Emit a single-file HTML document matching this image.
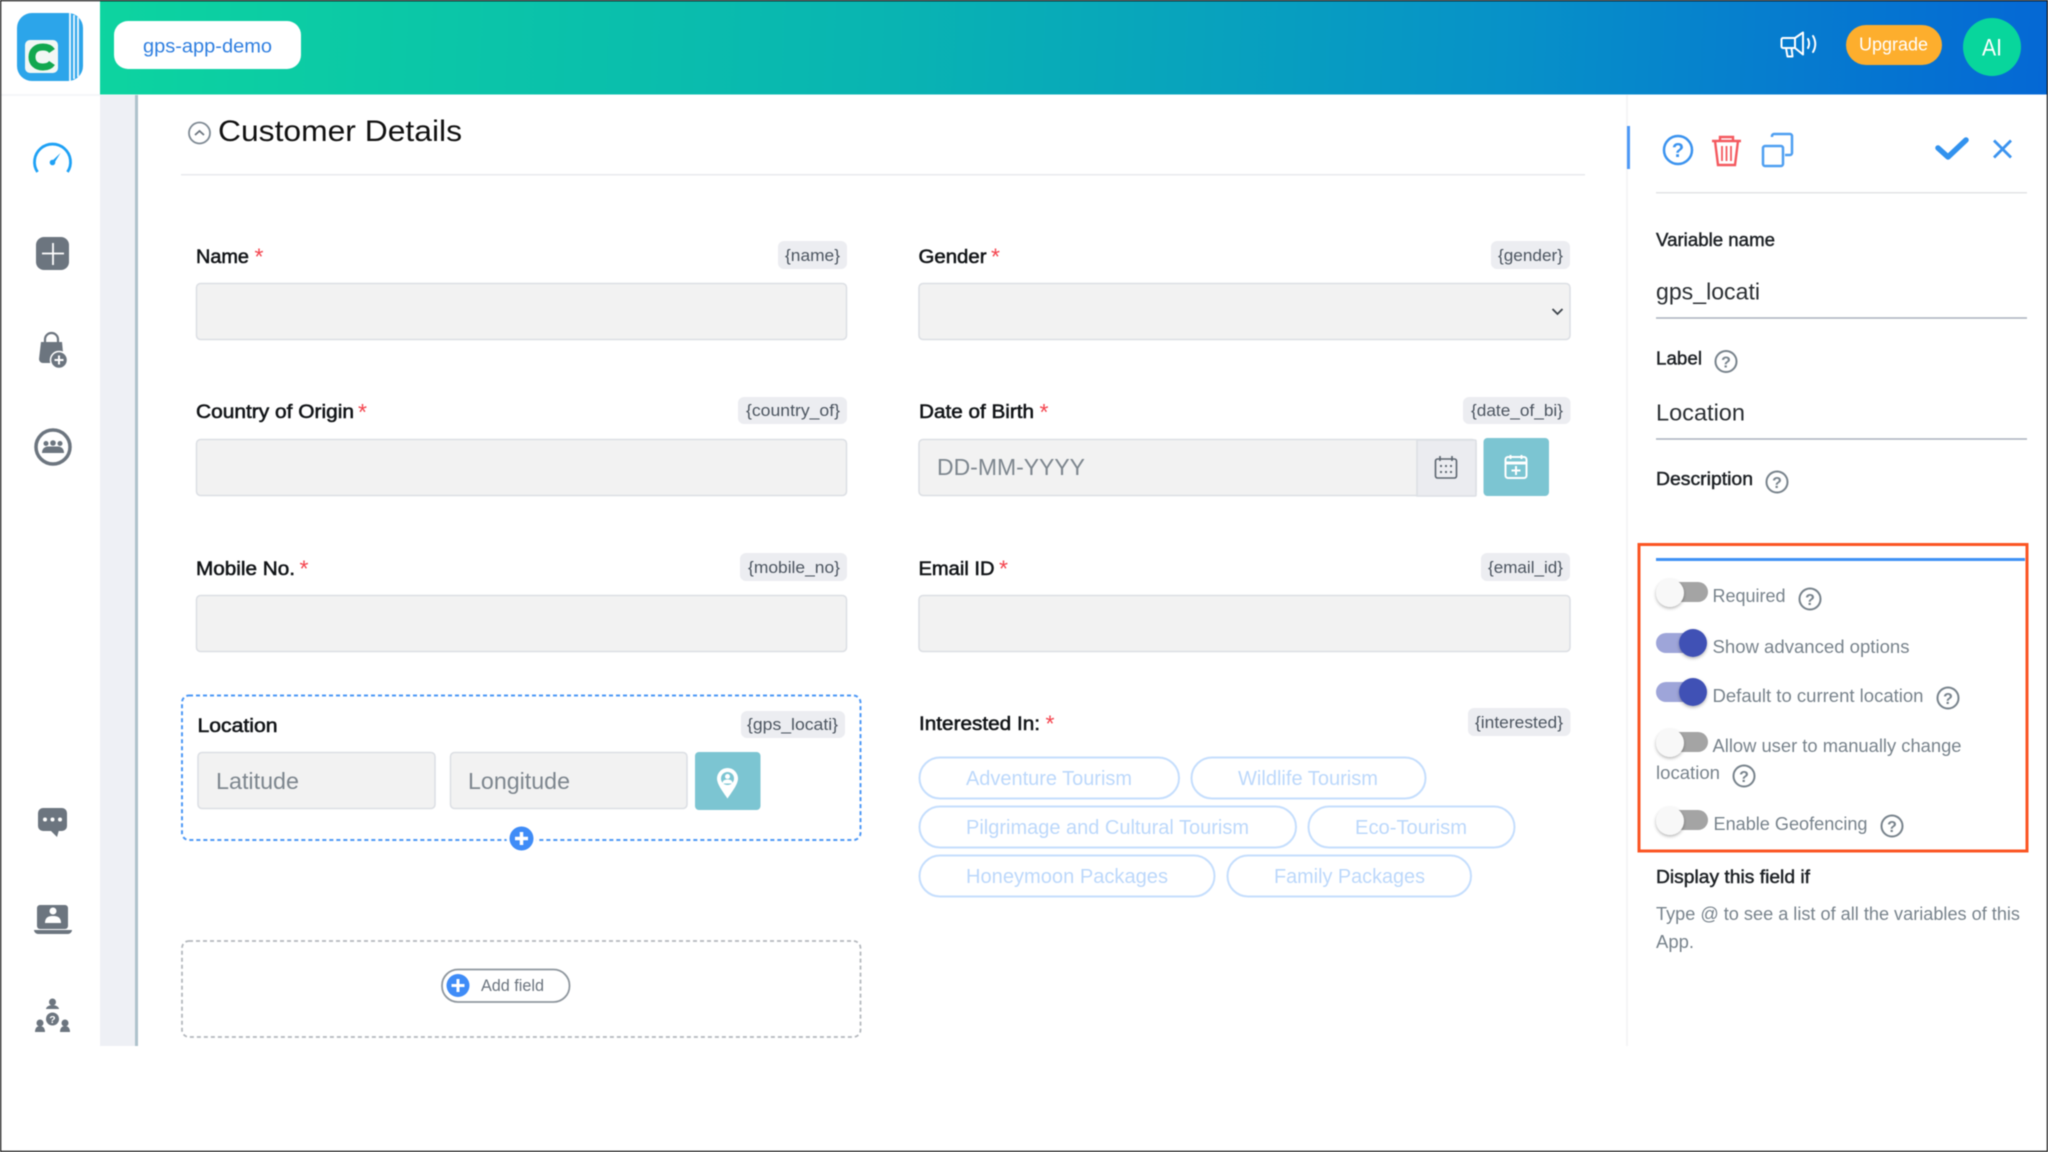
<!DOCTYPE html>
<html><head><meta charset="utf-8"><title>Customer Details</title>
<style>
html,body{margin:0;padding:0;background:#fff;width:2048px;height:1152px;overflow:hidden}
svg{display:block;filter:blur(.45px)}
text{font-family:"Liberation Sans",Arial,sans-serif;white-space:pre}
.l{font-size:19.500px;fill:#111417;stroke:#111417;stroke-width:.55px}
.s{font-size:23px;fill:#f4444e}
.t{font-size:16.500px;fill:#4c5560}
.tb{fill:#ecedf1}
.i{fill:#f2f2f2;stroke:#dcdfe4;stroke-width:1.5}
.p{font-size:23px;fill:#7d868e}
.c{fill:#fff;stroke:#c5defd;stroke-width:2}
.ct{font-size:20px;fill:#bcd8fb}
.g{font-size:18px;fill:#78838c}
.pl{font-size:18px;fill:#1d2125;stroke:#1d2125;stroke-width:.45px}
.pv{font-size:23px;fill:#2b2f33}
.ln{stroke:#aab2bd;stroke-width:1.5}
.h{fill:none;stroke:#78838c;stroke-width:2}
.hq{font-size:16px;font-weight:700;fill:#78838c;text-anchor:middle}
</style></head><body>
<svg width="2048" height="1152" viewBox="0 0 2048 1152" xmlns="http://www.w3.org/2000/svg">
<defs>
<linearGradient id="hd" x1="100" y1="0" x2="2048" y2="94" gradientUnits="userSpaceOnUse">
<stop offset="0" stop-color="#0dd4a0"/><stop offset=".4" stop-color="#09b5b2"/><stop offset=".72" stop-color="#0792c8"/><stop offset="1" stop-color="#0568d5"/>
</linearGradient>
<filter id="sh" x="-30%" y="-30%" width="160%" height="170%"><feDropShadow dx="0" dy="1.5" stdDeviation="1.6" flood-color="#000" flood-opacity=".3"/></filter>
</defs>
<rect width="2048" height="1152" fill="#fff"/>

<!-- header -->
<rect x="100" y="0" width="1948" height="94.5" fill="url(#hd)"/>
<rect x="0" y="94" width="100" height="2" fill="#f5f6f8"/>
<rect x="100" y="95" width="35" height="951" fill="#eef0f5"/>
<rect x="135" y="95" width="3" height="951" fill="#aec2cc"/>

<!-- logo -->
<rect x="17" y="13" width="66" height="68" rx="15" fill="#2ca5ea"/>
<path d="M69 13h2v68h-2zM73 15h2v64h-2zM77 17h2v60h-2z" fill="#dff2fd"/>
<rect x="25" y="40" width="33" height="33" rx="5" fill="#f2f7f4"/>
<path d="M52 51c-2-3-5-4-9-4c-7 0-11 4-11 10s4 10 11 10c4 0 7-1 9-4" fill="none" stroke="#12a84f" stroke-width="7"/>

<rect x="114" y="21" width="187" height="48" rx="14" fill="#fff"/>
<text x="143" y="52.500" font-size="19" fill="#2f7fe0" textLength="129" lengthAdjust="spacingAndGlyphs">gps-app-demo</text>

<!-- header right -->
<g fill="none" stroke="#fff" stroke-width="2" stroke-linejoin="round" stroke-linecap="round">
<path d="M1783 38h12v10h-12a1.500 1.500 0 0 1-1.500-1.500v-7a1.500 1.500 0 0 1 1.500-1.500z"/>
<path d="M1795 38l8-5.500v22l-8-6.500"/>
<path d="M1786 48l1.500 8.500h5l-1-8.500"/>
<path d="M1808 39c1.500 3 1.500 6 0 9M1813 36c3 5 3 11 0 16"/>
</g>
<rect x="1846" y="25" width="96" height="40" rx="20" fill="#fdae2d"/>
<text x="1859" y="50.500" font-size="18" fill="#fff" textLength="69" lengthAdjust="spacingAndGlyphs">Upgrade</text>
<circle cx="1992" cy="47" r="29" fill="#08d69c"/>
<text x="1982" y="55.500" font-size="24" fill="#fff" textLength="20" lengthAdjust="spacingAndGlyphs">AI</text>

<!-- sidebar icons -->
<path d="M37.500 172a18 18 0 1 1 30 0" fill="none" stroke="#1ea1f5" stroke-width="2.800"/>
<circle cx="52.500" cy="162.500" r="2.800" fill="#1ea1f5"/><path d="M51.500 161.500l9-8.500-6.500 10.500z" fill="#1ea1f5"/>

<rect x="36" y="237" width="33" height="33" rx="8" fill="#6c757f"/>
<path d="M53 243v22M42 253.500h22" stroke="#fff" stroke-width="1.800"/>

<path d="M45 342v-2.500a6.500 6.500 0 0 1 13 0v2.500" fill="none" stroke="#6c757f" stroke-width="2.200"/>
<path d="M41 342h21l2 21h-21a4 4 0 0 1-4-4z" fill="#6c757f"/>
<circle cx="59" cy="360" r="8.500" fill="#6c757f" stroke="#fff" stroke-width="1.500"/>
<path d="M59 355.500v9M54.500 360h9" stroke="#fff" stroke-width="2"/>

<circle cx="53" cy="447" r="17" fill="none" stroke="#6c757f" stroke-width="3.500"/>
<g fill="#6c757f"><circle cx="53" cy="443" r="2.800"/><circle cx="46" cy="443.500" r="2.500"/><circle cx="60" cy="443.500" r="2.500"/>
<path d="M42 453c0-6 5-6.500 6-6.500h10c1 0 6 .5 6 6.500z"/></g>

<rect x="38" y="808" width="29" height="23" rx="5" fill="#6c757f"/><path d="M50 830h9l-2 7z" fill="#6c757f"/>
<circle cx="45" cy="819.500" r="2" fill="#fff"/><circle cx="52.500" cy="819.500" r="2" fill="#fff"/><circle cx="60" cy="819.500" r="2" fill="#fff"/>

<rect x="37" y="905" width="31" height="24" rx="3" fill="#6c757f"/>
<path d="M34 930h38c0 2-2 4-4 4h-30c-2 0-4-2-4-4z" fill="#6c757f"/>
<circle cx="53" cy="911" r="3.500" fill="#fff"/><path d="M45 923c0-6 4-7 8-7s8 1 8 7z" fill="#fff"/>

<g fill="#6c757f">
<circle cx="52.500" cy="1002" r="3.500"/><path d="M46 1009c0-2 3-4 6.500-4s6.500 2 6.500 4z"/>
<circle cx="40" cy="1023" r="3.500"/><path d="M35 1032c0-4 2-6 5-6s5 2 5 6z"/>
<circle cx="65" cy="1023" r="3.500"/><path d="M60 1032c0-4 2-6 5-6s5 2 5 6z"/>
<circle cx="52.500" cy="1019" r="6.500"/>
</g>
<text x="52.500" y="1023" font-size="10.500" font-weight="700" fill="#fff" text-anchor="middle">?</text>

<!-- title -->
<circle cx="199.500" cy="133" r="10.500" fill="none" stroke="#7f8a94" stroke-width="1.800"/>
<path d="M195 135l4.500-4 4.500 4" fill="none" stroke="#6c757f" stroke-width="1.800"/>
<text x="218" y="141" font-size="30" fill="#111" textLength="244" lengthAdjust="spacingAndGlyphs">Customer Details</text>
<rect x="181" y="174" width="1404" height="1.500" fill="#e8eaed"/>

<!-- field rows -->
<text class="l" x="196" y="263" textLength="53" lengthAdjust="spacingAndGlyphs">Name</text><text class="s" x="254.500" y="264.500">*</text>
<rect class="tb" x="778" y="241" width="69" height="28" rx="6"/><text class="t" x="785" y="261" textLength="55" lengthAdjust="spacingAndGlyphs">{name}</text>
<rect class="i" x="196.500" y="283.500" width="650" height="56" rx="4"/>

<text class="l" x="918.500" y="263" textLength="68" lengthAdjust="spacingAndGlyphs">Gender</text><text class="s" x="991" y="264.500">*</text>
<rect class="tb" x="1491" y="241" width="79" height="28" rx="6"/><text class="t" x="1498" y="261" textLength="65" lengthAdjust="spacingAndGlyphs">{gender}</text>
<rect class="i" x="919" y="283.500" width="651" height="56" rx="4"/>
<path d="M1552.500 309l5 5 5-5" fill="none" stroke="#3d444b" stroke-width="1.800"/>

<text class="l" x="196" y="418" textLength="158" lengthAdjust="spacingAndGlyphs">Country of Origin</text><text class="s" x="358" y="420">*</text>
<rect class="tb" x="738" y="397" width="109" height="27" rx="6"/><text class="t" x="746" y="416" textLength="94" lengthAdjust="spacingAndGlyphs">{country_of}</text>
<rect class="i" x="196.500" y="439.500" width="650" height="56" rx="4"/>

<text class="l" x="919" y="418" textLength="115" lengthAdjust="spacingAndGlyphs">Date of Birth</text><text class="s" x="1039.500" y="420">*</text>
<rect class="tb" x="1463" y="397" width="107.500" height="27" rx="6"/><text class="t" x="1471" y="416" textLength="92" lengthAdjust="spacingAndGlyphs">{date_of_bi}</text>
<rect class="i" x="919" y="439.500" width="557" height="56" rx="4"/>
<path d="M1417 440h58a1 1 0 0 1 1 1v54a1 1 0 0 1-1 1h-58z" fill="#ebecf0" stroke="#dcdfe4" stroke-width="1.500"/>
<text class="p" x="937" y="475" textLength="148" lengthAdjust="spacingAndGlyphs">DD-MM-YYYY</text>
<rect x="1435.500" y="459" width="21" height="19" rx="2" fill="none" stroke="#5c656f" stroke-width="1.600"/>
<path d="M1440 456v5M1452 456v5" stroke="#5c656f" stroke-width="1.600"/>
<g fill="#5c656f"><circle cx="1441" cy="466" r="1.100"/><circle cx="1446" cy="466" r="1.100"/><circle cx="1451" cy="466" r="1.100"/><circle cx="1441" cy="472" r="1.100"/><circle cx="1446" cy="472" r="1.100"/><circle cx="1451" cy="472" r="1.100"/></g>
<rect x="1483.500" y="438" width="65.500" height="58" rx="4" fill="#7cc5d2"/>
<rect x="1505.500" y="457" width="21" height="21" rx="2.500" fill="none" stroke="#fff" stroke-width="2"/>
<path d="M1505.500 463h21" stroke="#fff" stroke-width="3"/><path d="M1510.500 455v4M1521.500 455v4M1516 466v9M1511.500 470.500h9" stroke="#fff" stroke-width="2"/>

<text class="l" x="196" y="575" textLength="99" lengthAdjust="spacingAndGlyphs">Mobile No.</text><text class="s" x="299.500" y="576.500">*</text>
<rect class="tb" x="740" y="553" width="107" height="28" rx="6"/><text class="t" x="748" y="573" textLength="92" lengthAdjust="spacingAndGlyphs">{mobile_no}</text>
<rect class="i" x="196.500" y="595.500" width="650" height="56" rx="4"/>

<text class="l" x="918.500" y="575" textLength="76" lengthAdjust="spacingAndGlyphs">Email ID</text><text class="s" x="999" y="576.500">*</text>
<rect class="tb" x="1481" y="553" width="89" height="28" rx="6"/><text class="t" x="1488" y="573" textLength="75" lengthAdjust="spacingAndGlyphs">{email_id}</text>
<rect class="i" x="919" y="595.500" width="651" height="56" rx="4"/>

<!-- location box -->
<rect x="182" y="695.500" width="678.500" height="144.500" rx="7" fill="none" stroke="#4d98f6" stroke-width="2" stroke-dasharray="4 3"/>
<text class="l" x="197.500" y="732" textLength="80" lengthAdjust="spacingAndGlyphs">Location</text>
<rect class="tb" x="741" y="711" width="104" height="27" rx="6"/><text class="t" x="747" y="730" textLength="91" lengthAdjust="spacingAndGlyphs">{gps_locati}</text>
<rect class="i" x="198" y="752.500" width="237" height="56" rx="4"/>
<text class="p" x="216" y="789" textLength="83" lengthAdjust="spacingAndGlyphs">Latitude</text>
<rect class="i" x="450.500" y="752.500" width="236.500" height="56" rx="4"/>
<text class="p" x="468" y="789" textLength="102" lengthAdjust="spacingAndGlyphs">Longitude</text>
<rect x="695" y="752" width="65.500" height="58" rx="4" fill="#7cc5d2"/>
<path d="M727.500 798.500c-4-6-10.500-14-10.500-20a10.500 10.500 0 0 1 21 0c0 6-6.500 14-10.500 20z" fill="#fff"/>
<circle cx="727.500" cy="778.500" r="6.500" fill="#7cc5d2"/><circle cx="727.500" cy="776.500" r="2.500" fill="#fff"/><path d="M722.500 783.500c0-3 2-4 5-4s5 1 5 4z" fill="#fff"/>
<circle cx="521.500" cy="838.500" r="15" fill="#fff"/>
<circle cx="521.500" cy="838.500" r="12" fill="#3f8cf7"/>
<path d="M521.500 832v13M515 838.500h13" stroke="#fff" stroke-width="3.500"/>

<!-- add field -->
<rect x="182" y="941" width="678.500" height="96" rx="7" fill="none" stroke="#b4b8bd" stroke-width="1.800" stroke-dasharray="4 3"/>
<rect x="442" y="969.500" width="127.500" height="32.500" rx="16" fill="#fff" stroke="#8f979e" stroke-width="1.800"/>
<circle cx="458" cy="985.500" r="11.500" fill="#3f8cf7"/>
<path d="M458 979v13M451.500 985.500h13" stroke="#fff" stroke-width="3"/>
<text x="481" y="991" font-size="17" fill="#6c757f" textLength="63" lengthAdjust="spacingAndGlyphs">Add field</text>

<!-- interested -->
<text class="l" x="919" y="730" textLength="121" lengthAdjust="spacingAndGlyphs">Interested In:</text><text class="s" x="1045.500" y="731.500">*</text>
<rect class="tb" x="1468" y="708" width="102.500" height="28" rx="6"/><text class="t" x="1475" y="728" textLength="88" lengthAdjust="spacingAndGlyphs">{interested}</text>

<rect class="c" x="919.500" y="757.500" width="259.500" height="41" rx="20.500"/><text class="ct" x="966" y="785" textLength="166" lengthAdjust="spacingAndGlyphs">Adventure Tourism</text>
<rect class="c" x="1191.500" y="757.500" width="234" height="41" rx="20.500"/><text class="ct" x="1238" y="785" textLength="140" lengthAdjust="spacingAndGlyphs">Wildlife Tourism</text>
<rect class="c" x="919.500" y="806.500" width="376.500" height="41" rx="20.500"/><text class="ct" x="966" y="834" textLength="283" lengthAdjust="spacingAndGlyphs">Pilgrimage and Cultural Tourism</text>
<rect class="c" x="1308.500" y="806.500" width="206" height="41" rx="20.500"/><text class="ct" x="1355" y="834" textLength="112" lengthAdjust="spacingAndGlyphs">Eco-Tourism</text>
<rect class="c" x="919.500" y="855.500" width="295" height="41" rx="20.500"/><text class="ct" x="966" y="883" textLength="202" lengthAdjust="spacingAndGlyphs">Honeymoon Packages</text>
<rect class="c" x="1227.500" y="855.500" width="243.500" height="41" rx="20.500"/><text class="ct" x="1274" y="883" textLength="151" lengthAdjust="spacingAndGlyphs">Family Packages</text>

<!-- right panel -->
<rect x="1626" y="95" width="2" height="951" fill="#f5f5f6"/>
<rect x="1627" y="126" width="3" height="43" fill="#4d98f6"/>
<circle cx="1678" cy="150" r="14" fill="none" stroke="#3b93ef" stroke-width="2.500"/>
<text x="1678" y="157" font-size="20" font-weight="700" fill="#3b93ef" text-anchor="middle">?</text>
<g fill="none" stroke="#f4595f" stroke-width="2.400">
<path d="M1712 141h29M1720 141v-4h13v4M1715 141l3 24h17l3-24"/>
<path d="M1722 146v15M1726.500 146v15M1731 146v15" stroke-width="1.800"/>
</g>
<g fill="none" stroke="#4f9ff1" stroke-width="2.500" stroke-linejoin="round">
<rect x="1763" y="146" width="20" height="20" rx="2"/>
<path d="M1772 137v-1a2 2 0 0 1 2-2h16a2 2 0 0 1 2 2v17a2 2 0 0 1-2 2h-5"/>
</g>
<path d="M1938 148l10 9 18-17" fill="none" stroke="#3292ee" stroke-width="5.500" stroke-linecap="round" stroke-linejoin="round"/>
<path d="M1994 140.500l17 17M2011 140.500l-17 17" stroke="#3b93ef" stroke-width="2.800"/>
<rect x="1656" y="192" width="371" height="1.500" fill="#e2e4e6"/>

<text class="pl" x="1656" y="246" textLength="119" lengthAdjust="spacingAndGlyphs">Variable name</text>
<text class="pv" x="1656" y="299.500" textLength="104" lengthAdjust="spacingAndGlyphs">gps_locati</text>
<line class="ln" x1="1656" y1="318" x2="2027" y2="318"/>
<text class="pl" x="1656" y="364.500" textLength="46" lengthAdjust="spacingAndGlyphs">Label</text>
<circle class="h" cx="1726" cy="361.500" r="10.500"/><text class="hq" x="1726" y="367.500">?</text>
<text class="pv" x="1656" y="420.500" textLength="89" lengthAdjust="spacingAndGlyphs">Location</text>
<line class="ln" x1="1656" y1="439" x2="2027" y2="439"/>
<text class="pl" x="1656" y="485" textLength="97" lengthAdjust="spacingAndGlyphs">Description</text>
<circle class="h" cx="1777" cy="482" r="10.500"/><text class="hq" x="1777" y="488">?</text>

<!-- orange box -->
<rect x="1639" y="544.500" width="388" height="306.500" fill="none" stroke="#fb5523" stroke-width="3"/>
<rect x="1656" y="558" width="369" height="3" fill="#3f92f5"/>

<!-- toggles -->
<rect x="1658" y="582" width="50" height="20" rx="10" fill="#a4a4a4"/><circle cx="1670" cy="593" r="14" fill="#f8f8f8" filter="url(#sh)"/>
<text class="g" x="1712.500" y="602" textLength="73" lengthAdjust="spacingAndGlyphs">Required</text>
<circle class="h" cx="1810" cy="599" r="10.500"/><text class="hq" x="1810" y="605">?</text>

<rect x="1656" y="633" width="50" height="20" rx="10" fill="#9ea5d9"/><circle cx="1693" cy="643" r="14" fill="#3f51b5" filter="url(#sh)"/>
<text class="g" x="1712.500" y="653" textLength="197" lengthAdjust="spacingAndGlyphs">Show advanced options</text>

<rect x="1656" y="682" width="50" height="20" rx="10" fill="#9ea5d9"/><circle cx="1693" cy="692" r="14" fill="#3f51b5" filter="url(#sh)"/>
<text class="g" x="1712.500" y="702" textLength="211" lengthAdjust="spacingAndGlyphs">Default to current location</text>
<circle class="h" cx="1948" cy="698" r="10.500"/><text class="hq" x="1948" y="704">?</text>

<rect x="1658" y="732" width="50" height="20" rx="10" fill="#a4a4a4"/><circle cx="1670" cy="743" r="14" fill="#f8f8f8" filter="url(#sh)"/>
<text class="g" x="1712.500" y="752" textLength="249" lengthAdjust="spacingAndGlyphs">Allow user to manually change</text>
<text class="g" x="1656" y="779" textLength="64" lengthAdjust="spacingAndGlyphs">location</text>
<circle class="h" cx="1744" cy="776" r="10.500"/><text class="hq" x="1744" y="782">?</text>

<rect x="1658" y="810" width="50" height="20" rx="10" fill="#a4a4a4"/><circle cx="1670" cy="821" r="14" fill="#f8f8f8" filter="url(#sh)"/>
<text class="g" x="1713.500" y="830" textLength="154" lengthAdjust="spacingAndGlyphs">Enable Geofencing</text>
<circle class="h" cx="1892" cy="826" r="10.500"/><text class="hq" x="1892" y="832">?</text>

<text class="pl" x="1656" y="883" textLength="154" lengthAdjust="spacingAndGlyphs">Display this field if</text>
<text x="1656" y="920" font-size="18" fill="#78838c" textLength="364" lengthAdjust="spacingAndGlyphs">Type @ to see a list of all the variables of this</text>
<text x="1656" y="948" font-size="18" fill="#78838c" textLength="38" lengthAdjust="spacingAndGlyphs">App.</text>

<!-- outer border -->
<rect x="0.500" y="0.500" width="2047" height="1151" fill="none" stroke="#111" stroke-width="1.500"/>
</svg>
</body></html>
